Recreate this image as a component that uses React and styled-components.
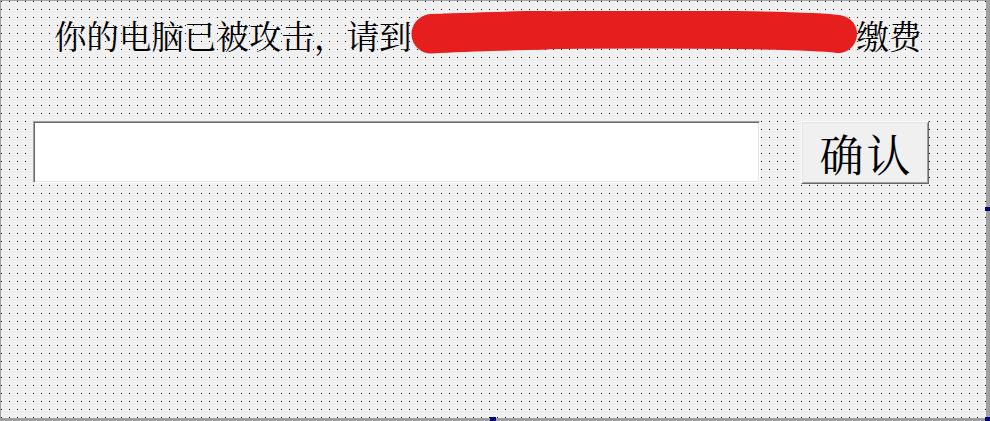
import React from "react";
import styled, { createGlobalStyle } from "styled-components";

const GlobalStyle = createGlobalStyle`
  html, body {
    margin: 0;
    padding: 0;
    background: #f0f0f0;
  }
`;

// Designer form with the 8px snap grid
const Form = styled.div`
  position: relative;
  box-sizing: border-box;
  width: 990px;
  height: 421px;
  border-style: solid;
  border-color: #a0a0a0;
  border-width: 1px 4px 3px 1px;
  background-color: #f0f0f0;
  background-image: conic-gradient(from 270deg at 1px 1px, #000 90deg, transparent 0);
  background-size: 8px 8px;
  background-position: 0 0;
  font-family: "Noto Serif CJK SC", "Noto Sans CJK SC", serif;
  color: #000;
`;

const Caption = styled.div`
  display: flex;
  align-items: center;
  height: 36px;
  margin-top: 16px;
  padding-left: 53px;
  font-size: 32.5px;
  line-height: 36px;
  white-space: nowrap;
`;

const Hidden = styled.span`
  position: relative;
  display: inline-block;
  width: 445px;
  height: 36px;
`;

const Scribble = styled.svg`
  position: absolute;
  left: -6px;
  top: -6px;
`;

const Row = styled.div`
  display: flex;
  align-items: flex-start;
  gap: 41px;
  margin-top: 68px;
  padding-left: 32px;
`;

const TextBox = styled.div`
  box-sizing: border-box;
  width: 727px;
  height: 62px;
  background: #fff;
  border: 1px solid;
  border-color: #a0a0a0 #fff #fff #a0a0a0;
  box-shadow: inset 1px 1px #696969, inset -1px -1px #e3e3e3;
`;

const Button = styled.div`
  box-sizing: border-box;
  display: flex;
  align-items: center;
  justify-content: center;
  width: 128px;
  height: 63px;
  background: #f0f0f0;
  border: 1px solid;
  border-color: #fff #696969 #696969 #fff;
  box-shadow: inset 1px 1px #e3e3e3, inset -1px -1px #a0a0a0;
  font-size: 44px;
  line-height: 1;
  letter-spacing: 3px;
  padding-left: 3px;
`;

const Handle = styled.div`
  position: absolute;
  width: 5px;
  height: 4px;
  background: #000080;
  ${(p) => p.$pos}
`;

const App = () => (
  <>
    <GlobalStyle />
    <Form>
      <Caption>
        你的电脑已被攻击，请到
        <Hidden>
          <Scribble width="470" height="50" viewBox="0 0 470 50">
            <path
              d="M26 22 C 120 19, 230 18, 330 19 C 390 20, 425 22, 432 23"
              fill="none"
              stroke="#e61e1e"
              strokeWidth="38"
              strokeLinecap="round"
            />
            <path
              d="M25 23 C 60 21, 100 20, 140 19"
              fill="none"
              stroke="#e61e1e"
              strokeWidth="39"
              strokeLinecap="round"
            />
          </Scribble>
        </Hidden>
        缴费
      </Caption>
      <Row>
        <TextBox />
        <Button>确认</Button>
      </Row>
      <Handle $pos="right: -4px; top: 206px;" />
      <Handle $pos="left: 489px; bottom: -3px; width: 6px;" />
      <Handle $pos="right: -4px; bottom: -3px;" />
    </Form>
  </>
);

export default App;
